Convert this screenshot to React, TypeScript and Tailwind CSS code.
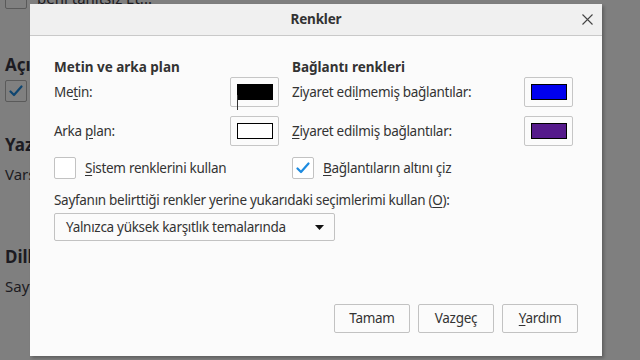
import React from "react";

const font = { fontFamily: '"Noto Sans", "Open Sans", sans-serif' };

function Check() {
  return (
    <svg width="14" height="12" viewBox="0 0 14 12" className="block">
      <polyline points="1.5,6.5 5,10 12.5,1.5" fill="none" stroke="#1d8be0" strokeWidth="2.2" strokeLinecap="round" strokeLinejoin="round" />
    </svg>
  );
}

function Swatch({ color, caret }: { color: string; caret?: boolean }) {
  return (
    <div className="relative w-[49px] h-[30px] border border-[#c6c6c6] rounded-[2px] bg-[#fbfbfb] flex items-center justify-center">
      <div className="w-[36px] h-[16px] border border-black" style={{ background: color }} />
      {caret && <div className="absolute left-[6px] top-[17px] w-px h-[15px] bg-[#333]" />}
    </div>
  );
}

function Box({ checked }: { checked?: boolean }) {
  return (
    <div className="w-[22px] h-[22px] border border-[#c2c2c2] rounded-[2px] bg-white flex items-center justify-center shrink-0">
      {checked && <Check />}
    </div>
  );
}

function Btn({ children }: { children: React.ReactNode }) {
  return (
    <div className="w-[76px] h-[29px] border border-[#c2c2c2] rounded-[2px] bg-[#fbfbfb] flex items-center justify-center text-[#333]">
      {children}
    </div>
  );
}

export default function App() {
  return (
    <div className="relative w-[640px] h-[360px] overflow-hidden bg-[#7f7f7f]" style={font}>
      {/* background page */}
      <div className="flex flex-col pl-[5px] text-[#1c1b22]">
        <div className="flex items-center gap-[10px] -mt-[13px] h-[22px]">
          <div className="w-[22px] h-[22px] border border-[#5a5a5a] rounded-[2px] bg-[#808080]" />
          <span className="text-[15px] leading-[18px]">beni tanıtsız Et...</span>
        </div>
        <div className="mt-[45px] text-[17px] font-bold leading-[22px]">Açık</div>
        <div className="mt-[4px] w-[22px] h-[22px] border border-[#5a5a5a] rounded-[2px] bg-[#808080] flex items-center justify-center">
          <svg width="14" height="12" viewBox="0 0 14 12"><polyline points="1.5,6.5 5,10 12.5,1.5" fill="none" stroke="#0e4570" strokeWidth="2.2" strokeLinecap="round" strokeLinejoin="round" /></svg>
        </div>
        <div className="mt-[32px] text-[17px] font-bold leading-[22px]">Yazı</div>
        <div className="mt-[8px] text-[15px] leading-[20px]">Varsayılan</div>
        <div className="mt-[62px] text-[17px] font-bold leading-[22px]">Diller</div>
        <div className="mt-[8px] text-[15px] leading-[20px]">Sayfa</div>
      </div>

      {/* dialog */}
      <div className="absolute left-[30px] top-[4px] w-[572px] h-[352px] bg-[#fbfbfb] flex flex-col shadow-[2px_2px_3px_rgba(0,0,0,0.25)] text-[13.5px] tracking-[-0.3px]">
        <div className="relative h-[32px] bg-[#f0f0f0] border-b border-[#c9c9c9] flex items-center justify-center shrink-0">
          <span className="font-bold text-[#333] tracking-[-0.2px]">Renkler</span>
          <svg className="absolute right-[9px] top-[10px]" width="11" height="11" viewBox="0 0 11 11">
            <path d="M0.5 0.5 L10.5 10.5 M10.5 0.5 L0.5 10.5" stroke="#444" strokeWidth="1.1" />
          </svg>
        </div>
        <div className="flex flex-col flex-1 pl-[24px] pr-[24px] pt-[21px] pb-[23px] text-[#333]">
          <div className="flex">
            <div className="w-[225px] flex flex-col">
              <div className="font-bold leading-[20px] tracking-normal">Metin ve arka plan</div>
              <div className="flex items-center justify-between h-[30px]">
                <span>Me<u className="underline-offset-2">t</u>in:</span>
                <Swatch color="#000000" caret />
              </div>
              <div className="flex items-center justify-between h-[30px] mt-[9px]">
                <span>Arka <u className="underline-offset-2">p</u>lan:</span>
                <Swatch color="#ffffff" />
              </div>
            </div>
            <div className="ml-[13px] w-[281px] flex flex-col">
              <div className="font-bold leading-[20px] tracking-normal">Bağlantı renkleri</div>
              <div className="flex items-center justify-between h-[30px]">
                <span>Ziyaret edi<u className="underline-offset-2">l</u>memiş bağlantılar:</span>
                <Swatch color="#0000ee" />
              </div>
              <div className="flex items-center justify-between h-[30px] mt-[9px]">
                <span><u className="underline-offset-2">Z</u>iyaret edilmiş bağlantılar:</span>
                <Swatch color="#551a8b" />
              </div>
            </div>
          </div>
          <div className="flex mt-[11px] h-[22px]">
            <div className="w-[238px] flex items-center gap-[9px]">
              <Box />
              <span><u className="underline-offset-2">S</u>istem renklerini kullan</span>
            </div>
            <div className="flex items-center gap-[9px]">
              <Box checked />
              <span><u className="underline-offset-2">B</u>ağlantıların altını çiz</span>
            </div>
          </div>
          <div className="mt-[11px] leading-[20px]">
            Sayfanın belirttiği renkler yerine yukarıdaki seçimlerimi kullan (<u className="underline-offset-2">O</u>):
          </div>
          <div className="mt-[3px] w-[281px] h-[28px] border border-[#c2c2c2] rounded-[2px] bg-[#fbfbfb] flex items-center justify-between pl-[11px] pr-[10px]">
            <span>Yalnızca yüksek karşıtlık temalarında</span>
            <svg width="9" height="5" viewBox="0 0 9 5"><path d="M0 0 L9 0 L4.5 5 Z" fill="#111" /></svg>
          </div>
          <div className="flex-1" />
          <div className="flex justify-end gap-[8px]">
            <Btn>Tamam</Btn>
            <Btn>Vazgeç</Btn>
            <Btn><span><u className="underline-offset-2">Y</u>ardım</span></Btn>
          </div>
        </div>
      </div>
    </div>
  );
}
